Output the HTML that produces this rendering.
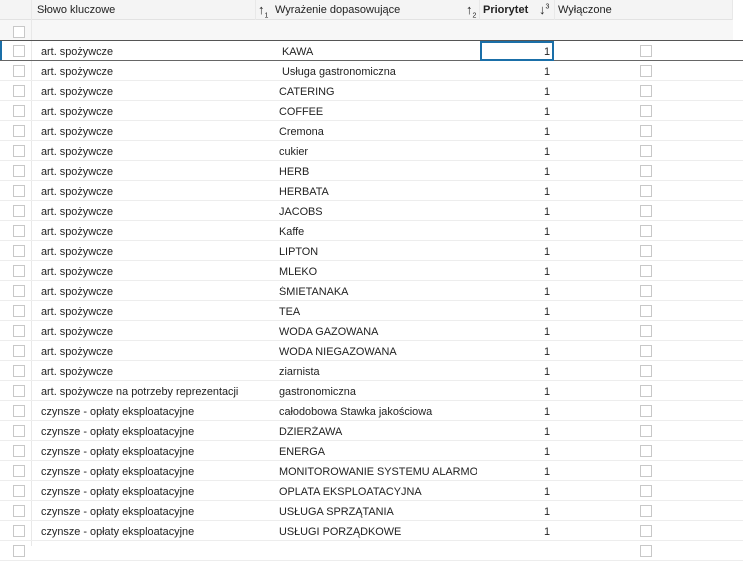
<!DOCTYPE html>
<html><head><meta charset="utf-8"><style>
*{margin:0;padding:0;box-sizing:border-box}
body{width:743px;height:546px;overflow:hidden;background:#fff;font-family:"Liberation Sans",sans-serif;font-size:11px;color:#222;position:relative}
.a{position:absolute}
.hdr{left:0;top:0;width:733px;height:20px;background:#f4f4f4;border-bottom:1px solid #e2e2e2}
.flt{left:0;top:20px;width:733px;height:20px;background:#f7f7f7}
.ht{top:4px;font-size:11px;color:#222;white-space:nowrap}
.vl{width:1px;background:#e8e8e8}
.row{left:0;width:743px;height:20px;border-bottom:1px solid #ededed}
.cb{width:12px;height:12px;border:1px solid #c8c8c8;background:#fff}
.t{white-space:nowrap;line-height:12px;font-size:10.9px}
.ar{font-size:13px;top:2px}
</style></head><body>
<div class="a hdr"></div>
<div class="a flt"></div>
<div class="a vl" style="left:31px;top:0;height:546px"></div>
<div class="a vl" style="left:255px;top:0;height:20px"></div>
<div class="a vl" style="left:479px;top:0;height:20px"></div>
<div class="a vl" style="left:554px;top:0;height:20px"></div>
<div class="a vl" style="left:732px;top:0;height:20px"></div>
<div class="a ht" style="left:37px">Słowo kluczowe</div>
<div class="a ht ar" style="left:258px">↑<sub style="font-size:7px">1</sub></div>
<div class="a ht" style="left:275px">Wyrażenie dopasowujące</div>
<div class="a ht ar" style="left:466px">↑<sub style="font-size:7px">2</sub></div>
<div class="a ht" style="left:483px;font-weight:bold">Priorytet</div>
<div class="a ht ar" style="left:539px">↓<sup style="font-size:7px">3</sup></div>
<div class="a ht" style="left:558px">Wyłączone</div>
<div class="a cb" style="left:13px;top:26px"></div>
<div id="rows"></div>
<script>
var d=[["art. spożywcze"," KAWA"],["art. spożywcze"," Usługa gastronomiczna"],["art. spożywcze","CATERING"],["art. spożywcze","COFFEE"],["art. spożywcze","Cremona"],["art. spożywcze","cukier"],["art. spożywcze","HERB"],["art. spożywcze","HERBATA"],["art. spożywcze","JACOBS"],["art. spożywcze","Kaffe"],["art. spożywcze","LIPTON"],["art. spożywcze","MLEKO"],["art. spożywcze","ŚMIETANAKA"],["art. spożywcze","TEA"],["art. spożywcze","WODA GAZOWANA"],["art. spożywcze","WODA NIEGAZOWANA"],["art. spożywcze","ziarnista"],["art. spożywcze na potrzeby reprezentacji","gastronomiczna"],["czynsze - opłaty eksploatacyjne","całodobowa Stawka jakościowa"],["czynsze - opłaty eksploatacyjne","DZIERŻAWA"],["czynsze - opłaty eksploatacyjne","ENERGA"],["czynsze - opłaty eksploatacyjne","MONITOROWANIE SYSTEMU ALARMOW"],["czynsze - opłaty eksploatacyjne","OPLATA EKSPLOATACYJNA"],["czynsze - opłaty eksploatacyjne","USŁUGA SPRZĄTANIA"],["czynsze - opłaty eksploatacyjne","USŁUGI PORZĄDKOWE"],["",""]];
var h="";
d.forEach(function(r,i){var y=41+20*i;
h+='<div class="a row" style="top:'+y+'px'+(i==0?';border-bottom:1px solid #666':'')+'"></div>';
h+='<div class="a cb" style="left:13px;top:'+(y+4)+'px"></div>';
h+='<div class="a cb" style="left:640px;top:'+(y+4)+'px"></div>';
if(r[0]){h+='<div class="a t" style="left:41px;top:'+(y+5)+'px">'+r[0]+'</div>';
h+='<div class="a t" style="left:279px;width:198px;overflow:hidden;top:'+(y+5)+'px;white-space:pre">'+r[1]+'</div>';
h+='<div class="a t" style="left:500px;width:50px;text-align:right;top:'+(y+5)+'px">1</div>';}
});
h+='<div class="a" style="left:0;top:40px;width:743px;height:1px;background:#555"></div>';
h+='<div class="a" style="left:0;top:41px;width:2px;height:19px;background:#1a6fa8"></div>';
h+='<div class="a" style="left:480px;top:41px;width:74px;height:20px;border:2px solid #1a6fa8"></div>';
document.getElementById("rows").innerHTML=h;
</script>
</body></html>
